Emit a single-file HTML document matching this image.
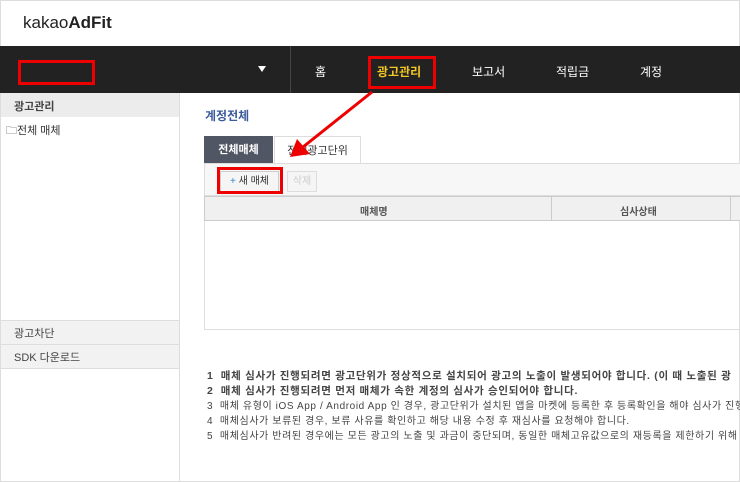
<!DOCTYPE html><html><head><meta charset="utf-8"><style>
*{margin:0;padding:0;box-sizing:border-box}
body{width:740px;height:482px;overflow:hidden;background:#fff;font-family:"Liberation Sans","Noto Sans CJK KR",sans-serif;position:relative;font-size:11px;color:#333}
.a{position:absolute}
</style></head><body>
<div class="a" style="left:0;top:0;width:740px;height:482px;border:1px solid #ddd"></div>
<div class="a" style="left:23px;top:13px;font-size:17px;color:#222">kakao<b>AdFit</b></div>
<div class="a" style="left:0;top:46px;width:740px;height:47px;background:#222"></div>
<div class="a" style="left:290px;top:46px;width:1px;height:47px;background:#444"></div>
<div class="a" style="left:18px;top:60px;width:77px;height:25px;border:3px solid #e00"></div>
<div class="a" style="left:258px;top:66px;width:0;height:0;border-left:4px solid transparent;border-right:4px solid transparent;border-top:6px solid #fff"></div>
<div class="a" style="left:315px;top:63px;color:#fff;font-size:12px">홈</div>
<div class="a" style="left:377px;top:63px;color:#f3c623;font-size:12px;font-weight:bold">광고관리</div>
<div class="a" style="left:368px;top:56px;width:68px;height:33px;border:3px solid #e00"></div>
<div class="a" style="left:472px;top:63px;color:#fff;font-size:12px">보고서</div>
<div class="a" style="left:556px;top:63px;color:#fff;font-size:12px">적립금</div>
<div class="a" style="left:640px;top:63px;color:#fff;font-size:12px">계정</div>
<div class="a" style="left:179px;top:93px;width:1px;height:389px;background:#ddd"></div>
<div class="a" style="left:1px;top:93px;width:178px;height:24px;background:#ececec"></div>
<div class="a" style="left:14px;top:98px;font-weight:bold;color:#444">광고관리</div>
<div class="a" style="left:6px;top:122px;color:#333">🗀전체 매체</div>
<div class="a" style="left:1px;top:320px;width:178px;height:48px;background:#f2f2f2;border-top:1px solid #ddd"></div>
<div class="a" style="left:1px;top:344px;width:178px;height:1px;background:#ddd"></div>
<div class="a" style="left:1px;top:368px;width:178px;height:1px;background:#ddd"></div>
<div class="a" style="left:14px;top:325px;color:#444">광고차단</div>
<div class="a" style="left:14px;top:349px;color:#444">SDK 다운로드</div>
<div class="a" style="left:205px;top:107px;color:#3a5a9a;font-weight:bold;font-size:12px">계정전체</div>
<div class="a" style="left:204px;top:136px;width:69px;height:28px;background:#505663;color:#fff;font-weight:bold;text-align:center;line-height:28px">전체매체</div>
<div class="a" style="left:274px;top:136px;width:87px;height:28px;border:1px solid #ddd;border-bottom:none;text-align:center;line-height:28px">전체광고단위</div>
<div class="a" style="left:204px;top:163px;width:536px;height:167px;border:1px solid #ddd;border-right:none"></div>
<div class="a" style="left:204px;top:163px;width:536px;height:33px;background:#f7f7f7;border:1px solid #ddd;border-right:none"></div>
<div class="a" style="left:220px;top:171px;width:59px;height:21px;border:1px solid #ccc;background:#f5f5f5;font-size:10px;text-align:center;line-height:19px"><span style="color:#38c">+</span> 새 매체</div>
<div class="a" style="left:217px;top:167px;width:66px;height:27px;border:3px solid #e00"></div>
<div class="a" style="left:287px;top:171px;width:30px;height:21px;border:1px solid #ddd;background:#f5f5f5;color:#ccc;font-size:10px;text-align:center;line-height:19px">삭제</div>
<div class="a" style="left:204px;top:196px;width:536px;height:25px;background:#f0f0f0;border:1px solid #ccc;border-right:none"></div>
<div class="a" style="left:551px;top:196px;width:1px;height:25px;background:#ccc"></div>
<div class="a" style="left:730px;top:196px;width:1px;height:25px;background:#ccc"></div>
<div class="a" style="left:360px;top:203px;font-weight:bold;font-size:10px;color:#555">매체명</div>
<div class="a" style="left:620px;top:203px;font-weight:bold;font-size:10px;color:#555">심사상태</div>
<svg class="a" style="left:0;top:0" width="740" height="482"><line x1="372" y1="92" x2="303" y2="147" stroke="#e00" stroke-width="3"/><polygon points="290,157 297,139 310,154" fill="#e00"/></svg>
<div class="a" style="left:207px;top:369px;font-size:10.5px;line-height:15px;white-space:nowrap;color:#444;letter-spacing:0.7px">
<div style="font-weight:bold">1 &nbsp;매체 심사가 진행되려면 광고단위가 정상적으로 설치되어 광고의 노출이 발생되어야 합니다. (이 때 노출된 광</div>
<div style="font-weight:bold">2 &nbsp;매체 심사가 진행되려면 먼저 매체가 속한 계정의 심사가 승인되어야 합니다.</div>
<div style="font-size:10px;letter-spacing:0.6px">3 &nbsp;매체 유형이 iOS App / Android App 인 경우, 광고단위가 설치된 앱을 마켓에 등록한 후 등록확인을 해야 심사가 진행됩</div>
<div style="font-size:10px;letter-spacing:0.6px">4 &nbsp;매체심사가 보류된 경우, 보류 사유를 확인하고 해당 내용 수정 후 재심사를 요청해야 합니다.</div>
<div style="font-size:10px;letter-spacing:0.6px">5 &nbsp;매체심사가 반려된 경우에는 모든 광고의 노출 및 과금이 중단되며, 동일한 매체고유값으로의 재등록을 제한하기 위해 매</div>
</div>
</body></html>
